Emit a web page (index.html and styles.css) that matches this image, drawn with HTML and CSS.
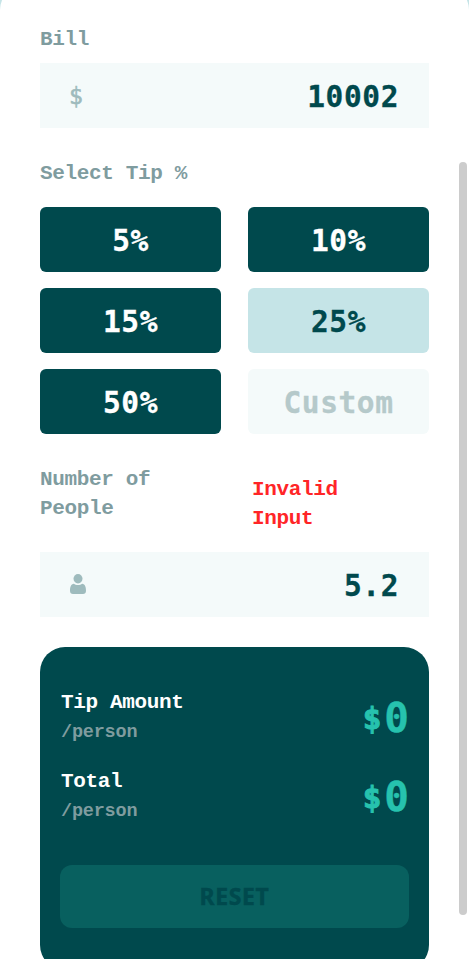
FILE: index.html
```html
<!DOCTYPE html>
<html lang="en">
<head>
<meta charset="utf-8">
<title>Tip Calculator</title>
<link rel="stylesheet" href="styles.css">
</head>
<body>
<main class="calculator">
  <section class="field">
    <h2 class="label">Bill</h2>
    <div class="input">
      <span class="dollar">$</span>
      <span class="value">10002</span>
    </div>
  </section>
  <section class="tips">
    <h2 class="label">Select Tip %</h2>
    <div class="tip-grid">
      <button class="tip">5%</button>
      <button class="tip">10%</button>
      <button class="tip">15%</button>
      <button class="tip active">25%</button>
      <button class="tip">50%</button>
      <button class="tip custom">Custom</button>
    </div>
  </section>
  <section class="people">
    <div class="people-head">
      <h2 class="label">Number of People</h2>
      <p class="error">Invalid Input</p>
    </div>
    <div class="input">
      <svg class="person" viewBox="0 0 16 20"><ellipse cx="8" cy="4.7" rx="4.5" ry="4.7"/><path d="M3.8 9.8C5.8 11.5 10.2 11.5 12.2 9.8C15 10 16 13 16 16.8C16 19 14.8 20 13 20H3C1.2 20 0 19 0 16.8C0 13 1 10 3.8 9.8Z"/></svg>
      <span class="value">5.2</span>
    </div>
  </section>
  <section class="summary">
    <div class="row">
      <div><h3 class="row-title">Tip Amount</h3><p class="per">/person</p></div>
      <div class="amount"><span class="currency">$</span><span class="number">0</span></div>
    </div>
    <div class="row">
      <div><h3 class="row-title">Total</h3><p class="per">/person</p></div>
      <div class="amount"><span class="currency">$</span><span class="number">0</span></div>
    </div>
    <button class="reset">RESET</button>
  </section>
</main>
<div class="scrollbar"></div>
</body>
</html>
```
FILE: styles.css
```css
* { box-sizing: border-box; margin: 0; padding: 0; }
html { background: #fff; overflow: hidden; }
body {
  width: 469px;
  height: 959px;
  overflow: hidden;
  background: #c5e4e7;
  font-family: "Liberation Mono", monospace;
  font-weight: 700;
}
.calculator {
  width: 469px;
  height: 975px;
  margin-top: -15px;
  padding: 39px 40px 0;
  background: #fff;
  border-radius: 25px 25px 0 0;
  overflow: hidden;
}
.label, .error, .row-title {
  font-size: 21px;
  line-height: 29px;
  letter-spacing: -0.36px;
}
.label { color: #7f9c9f; }
.field .label, .tips .label { padding-top: 1px; margin-bottom: -1px; }
.input {
  display: flex;
  justify-content: space-between;
  align-items: center;
  height: 65px;
  padding: 0 30px 0 29px;
  background: #f4fafa;
}
.field .input { margin-top: 10px; }
.field { height: 104px; }
.dollar { font: 400 23px/26px "DejaVu Sans Mono", monospace; color: #9ebbbd; -webkit-text-stroke: 0.6px #9ebbbd; }
.value {
  padding-top: 2px;
  font: 700 29.5px/40px "DejaVu Sans Mono", monospace;
  letter-spacing: 0.6px;
  color: #00494d;
  -webkit-text-stroke: 0.3px;
}
.tips { margin-top: 30px; }
.tip-grid {
  display: grid;
  grid-template-columns: 181px 181px;
  gap: 16px 27px;
  margin-top: 20px;
}
.tip {
  height: 65px;
  padding-top: 3px;
  border: 0;
  border-radius: 6px;
  background: #00494d;
  color: #fff;
  font: 700 29.5px "DejaVu Sans Mono", monospace;
  letter-spacing: 0.6px;
  -webkit-text-stroke: 0.3px;
}
.tip.active { background: #c5e4e7; color: #00494d; }
.tip.custom { background: #f4fafa; color: #b5c9ca; }
.people-head { display: flex; justify-content: space-between; margin: 31px 0 19px; }
.people-head .label { width: 150px; }
.error { width: 177px; padding: 10px 50px 0 0; color: #ff2527; }
.person { width: 16px; height: 20px; margin: -1px 0 0 1px; fill: #9ebbbd; }
.summary {
  height: 323px;
  margin-top: 30px;
  padding: 41px 20px 0;
  border-radius: 25px;
  background: #00494d;
}
.row { display: flex; justify-content: space-between; height: 59px; margin-bottom: 20px; }
.row-title { color: #fff; }
.row-title, .per { padding-left: 1px; }
.per { padding-top: 2px; font-size: 18.5px; line-height: 28px; letter-spacing: -0.2px; color: #7f9c9f; }
.amount { display: flex; align-items: center; font-family: "DejaVu Sans Mono", monospace; color: #26c2ae; }
.currency { font-size: 31px; -webkit-text-stroke: 1px; }
.number { font-size: 41px; margin-left: 3px; -webkit-text-stroke: 0.4px; }
.reset {
  width: 349px;
  height: 63px;
  margin-top: 19px;
  border: 0;
  border-radius: 12px;
  background: #08605f;
  color: #00494d;
  font: 700 23px/27px "Noto Sans", sans-serif;
  letter-spacing: 0.6px;
  padding-bottom: 1px;
  -webkit-text-stroke: 0.4px;
}
.scrollbar {
  position: absolute;
  left: 459px;
  top: 162px;
  width: 8px;
  height: 753px;
  border-radius: 4px;
  background: #ccc;
}
```
